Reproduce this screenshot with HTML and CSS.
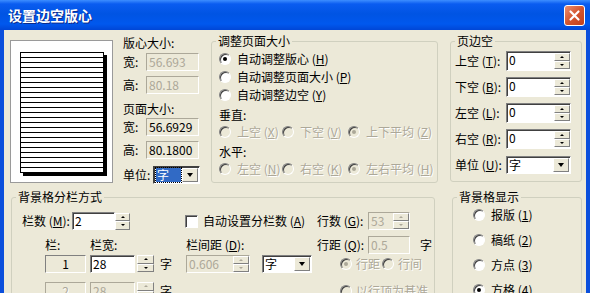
FILE: index.html
```html
<!DOCTYPE html>
<html lang="zh-CN">
<head>
<meta charset="UTF-8" />
<title>设置边空版心</title>
<link rel="stylesheet" href="styles.css">
</head>
<body>
<div class="window">
  <div class="titlebar">
    <span class="title">设置边空版心</span>
    <span class="close"><svg width="13" height="13" viewBox="0 0 13 13"><path d="M2.5 2.5 L10.5 10.5 M10.5 2.5 L2.5 10.5" stroke="#fff" stroke-width="2.2" stroke-linecap="round"/></svg></span>
  </div>

  <div class="client">
    <div class="top">
      <div class="preview"><div class="page"></div></div>

      <div class="sizes">
        <div class="cap mt2">版心大小:</div>
        <div class="row mt3"><span class="k">宽:</span><span class="edit ro dis w53">56.693</span></div>
        <div class="row mt5"><span class="k">高:</span><span class="edit ro dis w53">80.18</span></div>
        <div class="cap mt8">页面大小:</div>
        <div class="row mt2"><span class="k">宽:</span><span class="edit ro w53">56.6929</span></div>
        <div class="row mt5"><span class="k">高:</span><span class="edit ro w53">80.1800</span></div>
        <div class="row mt7"><span class="k kw30">单位:</span><span class="combo focus w47"><span class="val"><span class="hl">字</span></span><span class="btn"></span></span></div>
      </div>

      <fieldset class="grp adjust">
        <legend>调整页面大小</legend>
        <div class="body">
          <div class="opt mt2"><i class="rb on"></i>自动调整版心 (<u>H</u>)</div>
          <div class="opt"><i class="rb"></i>自动调整页面大小 (<u>P</u>)</div>
          <div class="opt"><i class="rb"></i>自动调整边空 (<u>Y</u>)</div>
          <div class="sub">垂直:</div>
          <div class="opt-row dim">
            <span class="opt w63"><i class="rb off"></i>上空 (<u>X</u>)</span>
            <span class="opt w66"><i class="rb off"></i>下空 (<u>V</u>)</span>
            <span class="opt"><i class="rb off on"></i>上下平均 (<u>Z</u>)</span>
          </div>
          <div class="sub">水平:</div>
          <div class="opt-row dim">
            <span class="opt w63"><i class="rb off"></i>左空 (<u>N</u>)</span>
            <span class="opt w66"><i class="rb off"></i>右空 (<u>K</u>)</span>
            <span class="opt"><i class="rb off on"></i>左右平均 (<u>H</u>)</span>
          </div>
        </div>
      </fieldset>

      <fieldset class="grp margin">
        <legend>页边空</legend>
        <div class="body">
          <div class="mrow mt3"><span class="k kw51">上空 (<u>T</u>):</span><span class="edit top-t w65"><span class="v">0</span><span class="spin"><i class="up"></i><i class="dn"></i></span></span></div>
          <div class="mrow"><span class="k kw51">下空 (<u>B</u>):</span><span class="edit top-t w65"><span class="v">0</span><span class="spin"><i class="up"></i><i class="dn"></i></span></span></div>
          <div class="mrow"><span class="k kw51">左空 (<u>L</u>):</span><span class="edit top-t w65"><span class="v">0</span><span class="spin"><i class="up"></i><i class="dn"></i></span></span></div>
          <div class="mrow"><span class="k kw51">右空 (<u>R</u>):</span><span class="edit top-t w65"><span class="v">0</span><span class="spin"><i class="up"></i><i class="dn"></i></span></span></div>
          <div class="mrow"><span class="k kw51">单位 (<u>U</u>):</span><span class="combo w65"><span class="val">字</span><span class="btn"></span></span></div>
        </div>
      </fieldset>
    </div>

    <div class="bottom">
      <fieldset class="grp cols">
        <legend>背景格分栏方式</legend>
        <div class="body">
          <div class="crow mt8">
            <span class="k kw50">栏数 (<u>M</u>):</span>
            <span class="field w43">2</span><span class="spin sp15"><i class="up"></i><i class="dn"></i></span>
            <span class="chk"><i class="cb"></i>自动设置分栏数 (<u>A</u>)</span>
            <span class="k kw51">行数 (<u>G</u>):</span>
            <span class="edit ro dis w42"><span class="v">53</span><span class="spin off"><i class="up"></i><i class="dn"></i></span></span>
          </div>
          <div class="crow mt6 indent">
            <span class="c1">栏:</span>
            <span class="c2">栏宽:</span>
            <span class="c3"></span>
            <span class="c45">栏间距 (<u>D</u>):</span>
            <span class="k kw51">行距 (<u>Q</u>):</span>
            <span class="edit ro dis w42"><span class="v">0.5</span></span>
            <span class="unit">字</span>
          </div>
          <div class="crow mt1 indent">
            <span class="c1"><span class="static">1</span></span>
            <span class="c2"><span class="field w45">28</span><span class="spin sp17"><i class="up"></i><i class="dn"></i></span></span>
            <span class="c3">字</span>
            <span class="c4"><span class="edit ro dis w64"><span class="v">0.606</span><span class="spin off"><i class="up"></i><i class="dn"></i></span></span></span>
            <span class="c5"><span class="combo w50"><span class="val">字</span><span class="btn"></span></span></span>
            <span class="c6 dim">
              <span class="opt w42"><i class="rb off on"></i>行距</span>
              <span class="opt"><i class="rb off"></i>行间</span>
            </span>
          </div>
          <div class="crow mt9 indent">
            <span class="c1"><span class="static dim">2</span></span>
            <span class="c2"><span class="field off w45">28</span><span class="spin sp17 off"><i class="up"></i><i class="dn"></i></span></span>
            <span class="c3">字</span>
            <span class="c45"></span>
            <span class="c6 dim">
              <span class="opt"><i class="rb off"></i>以行顶为基准</span>
            </span>
          </div>
        </div>
      </fieldset>

      <fieldset class="grp show">
        <legend>背景格显示</legend>
        <div class="body">
          <div class="opt mt2"><i class="rb"></i>报版 (<u>1</u>)</div>
          <div class="opt"><i class="rb"></i>稿纸 (<u>2</u>)</div>
          <div class="opt"><i class="rb"></i>方点 (<u>3</u>)</div>
          <div class="opt"><i class="rb on"></i>方格 (<u>4</u>)</div>
        </div>
      </fieldset>
    </div>
  </div>
</div>
</body>
</html>
```

FILE: styles.css
```css
* { box-sizing:border-box; }
body { margin:0; background:#ece9d8; font-family:"Noto Sans CJK SC", "Noto Sans", sans-serif; font-size:12px; line-height:14px; color:#000; }
u { text-decoration:underline; text-underline-offset:1px; }
i { display:block; }

/* window frame */
.window { width:590px; height:293px; overflow:hidden; display:flex; flex-direction:column; }
.titlebar { flex:none; height:30px; display:flex; align-items:center; justify-content:space-between; padding:0 5px 0 8px; background:linear-gradient(#3d8eff 0, #0a5cf0 4px, #0054e3 14px, #0058ee 24px, #0046d6 30px); }
.title { color:#fff; font-weight:bold; font-size:14px; line-height:16px; text-shadow:1px 1px 0 #0c2a8a; }
.close { width:21px; height:21px; border:1px solid #fff; border-radius:3px; background:linear-gradient(135deg, #ec8f70, #d4552f 50%, #c2401c); display:flex; align-items:center; justify-content:center; }

.client { flex:1; display:flex; flex-direction:column; padding:4px 0 0 6px; border-left:4px solid #0b4fdc; border-right:4px solid #0b4fdc; background:#ece9d8; }
.top { flex:none; display:flex; align-items:flex-start; height:149px; }
.bottom { display:flex; align-items:flex-start; margin-top:7px; }

/* spacing helpers */
.mt1 { margin-top:1px; } .mt2 { margin-top:2px; } .mt3 { margin-top:3px; } .mt5 { margin-top:5px; }
.mt6 { margin-top:6px; } .mt7 { margin-top:7px; } .mt8 { margin-top:8px; } .mt9 { margin-top:9px; }
.w42 { width:42px; } .w43 { width:43px; } .w45 { width:45px; } .w47 { width:47px; }
.w50 { width:50px; } .w53 { width:53px; } .w63 { width:63px; } .w64 { width:64px; } .w65 { width:65px; } .w66 { width:66px; }

/* preview */
.preview { margin-top:6px; width:103px; height:143px; border:1px solid #9a9a9a; background:#fff; padding:11px 0 0 9px; }
.page { width:84px; height:121px; border:1px solid #000; box-shadow:3px 3px 0 #000; background:repeating-linear-gradient(#fff 0 4px, #000 4px 5px); }

/* size column */
.sizes { margin-left:10px; width:78px; display:flex; flex-direction:column; }
.sizes .cap { height:14px; }
.sizes .row { display:flex; align-items:center; height:18px; }
.k { flex:none; width:23px; white-space:nowrap; }
.kw30 { width:30px; } .kw50 { width:50px; } .kw51 { width:51px; }

/* controls */
.edit { flex:none; display:flex; align-items:center; height:18px; border:1px solid; border-color:#808080 #fff #fff #808080; box-shadow:inset 1px 1px 0 #404040; background:#fff; padding-left:2px; overflow:hidden; white-space:nowrap; }
.edit .v { flex:1; }
.edit .spin { margin-left:auto; }
.edit.top-t { height:20px; align-items:flex-start; padding-top:1px; }
.edit.top-t .spin { height:16px; }
.edit.ro { background:#ece9d8; box-shadow:none; border-color:#aca899 #fff #fff #aca899; }
.edit.dis { color:#aca899; }
.field { flex:none; display:flex; align-items:center; height:18px; border:1px solid; border-color:#808080 #fff #fff #808080; box-shadow:inset 1px 1px 0 #404040; background:#fff; padding-left:2px; }
.field.off { background:#ece9d8; color:#aca899; box-shadow:none; border-color:#aca899 #fff #fff #aca899; }
.static { display:flex; align-items:center; justify-content:center; width:41px; height:18px; border:1px solid; border-color:#808080 #fff #fff #808080; }
.static.dim { border-color:#aca899 #fff #fff #aca899; }

.spin { flex:none; width:16px; height:16px; display:flex; flex-direction:column; }
.sp15 { width:15px; height:17px; } .sp17 { width:17px; height:17px; margin-left:2px; }
.spin i { flex:1; border:1px solid; border-color:#fff #808080 #808080 #fff; background:#ece9d8; display:flex; align-items:center; justify-content:center; }
.spin i::after { content:""; border-left:2px solid transparent; border-right:2px solid transparent; }
.spin .up::after { border-bottom:2px solid #000; }
.spin .dn::after { border-top:2px solid #000; }
.spin.off .up::after { border-bottom-color:#aca899; }
.spin.off .dn::after { border-top-color:#aca899; }

.combo { flex:none; display:flex; height:18px; border:1px solid; border-color:#808080 #fff #fff #808080; box-shadow:inset 1px 1px 0 #404040; background:#fff; padding:1px 1px 1px 2px; }
.combo .val { flex:1; display:flex; align-items:center; }
.combo .hl { background:#316ac5; color:#fff; width:25px; height:14px; padding-left:1px; outline:1px dotted #000; }
.combo.focus { border-color:#404040 #fff #fff #404040; }
.combo .btn { flex:none; width:16px; border:1px solid; border-color:#fff #808080 #808080 #fff; background:#ece9d8; display:flex; align-items:center; justify-content:center; }
.combo .btn::after { content:""; border-left:3.5px solid transparent; border-right:3.5px solid transparent; border-top:4px solid #000; }

.rb { flex:none; width:12px; height:12px; border-radius:50%; margin-right:6px; background:#fff; border:1px solid; border-color:#808080 #fff #fff #808080; box-shadow:inset 1px 1px 0 #404040; display:flex; align-items:center; justify-content:center; }
.rb.on::after { content:""; width:4px; height:4px; border-radius:50%; background:#000; }
.rb.off { background:#ece9d8; }
.rb.off.on::after { background:#aca899; }
.cb { flex:none; width:13px; height:13px; margin-right:5px; background:#fff; border:1px solid; border-color:#808080 #fff #fff #808080; box-shadow:inset 1px 1px 0 #404040; }

.dim { color:#aca899; text-shadow:1px 1px 0 #fff; }

/* group boxes */
.grp { margin:0; padding:0; border:1px solid #d0d0bf; border-radius:3px; min-width:0; }
.grp legend { margin-left:4px; padding:0 2px; line-height:14px; }
.adjust { margin-left:10px; width:227px; height:149px; }
.adjust .body { padding-left:7px; }
.margin { margin-left:12px; width:132px; height:148px; }
.margin .body { padding-left:4px; }
.cols { margin-left:1px; width:424px; height:120px; }
.cols .body { padding-left:10px; }
.show { margin-left:17px; width:130px; height:120px; }
.show .body { padding-left:20px; }

.opt { display:flex; align-items:center; height:18px; white-space:nowrap; flex:none; }
.opt-row { display:flex; height:18px; margin-top:-1px; }
.sub { height:18px; margin-top:2px; display:flex; align-items:center; }
.show .opt + .opt { margin-top:7px; }

.mrow { display:flex; align-items:center; height:20px; }
.mrow + .mrow { margin-top:6px; }

.crow { display:flex; align-items:center; height:18px; white-space:nowrap; }
.crow.indent { padding-left:23px; }
.chk { flex:none; display:flex; align-items:center; width:132px; margin-left:55px; }
.c1 { flex:none; width:45px; display:flex; }
.c2 { flex:none; width:70px; display:flex; }
.c3 { flex:none; width:26px; }
.c4 { flex:none; width:76px; display:flex; }
.c5 { flex:none; width:55px; display:flex; }
.c45 { flex:none; width:131px; }
.c6 { display:flex; padding-left:23px; }
.c6 .rb { margin-right:4px; }
.unit { margin-left:10px; }
```
